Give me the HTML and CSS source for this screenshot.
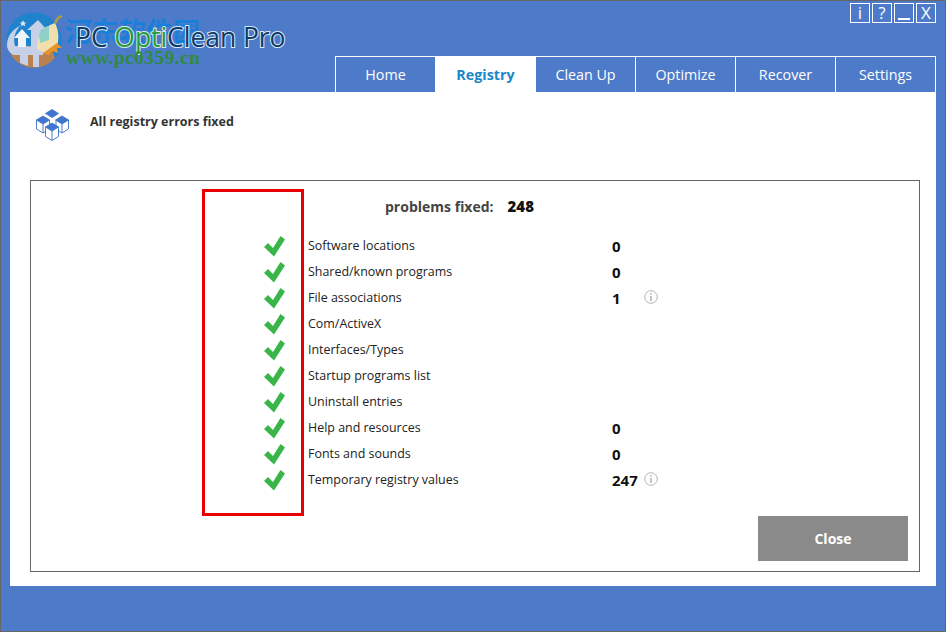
FILE: index.html
```html
<!DOCTYPE html>
<html lang="en">

<head>
    <meta charset="UTF-8">
    <title>PC OptiClean Pro</title>
    <link rel="stylesheet" href="styles.css">
</head>

<body>
    <div class="window">
        <header class="top">
            <div class="logo">
                <svg class="logo-icon" width="58" height="56" viewBox="0 0 58 56">
                    <circle cx="29" cy="28" r="27.500" fill="#1f82cc"/>
                    <path d="M1.500 34 L46 34 L50 46 A27.500 27.500 0 0 1 8 46 Z" fill="#b9814f"/>
                    <path d="M15 42 L23 42 L23 54 L15 51 Z M28 42 L34 42 L34 55 L28 55 Z" fill="#c6d0e6"/>
                    <path d="M2 33 C2 24 8 17 15 14 C10 20 8 26 10 34 L40 35 L38 43 L8 43 C4 40 2 37 2 33 Z" fill="#c6d0e6"/>
                    <path d="M13 35 L13 26 L9 26 L17 17 L25 26 L21 26 L21 35 Z" fill="#eef2f9"/>
                    <path d="M26 35 L26 18 L22 18 L33 8 L42 18 L36 18 L36 35 Z" fill="#c6d0e6"/>
                    <path d="M32 37 C31 28 36 18 45 13 L50 11 C54 18 54 28 52 34 L40 41 Z" fill="#f2dfae"/>
                    <path d="M34 23 C36 17 41 14 44 14 L44 28 L35 31 Z" fill="#8fd0c8"/>
                    <path d="M38 41 L45 36 L52 31 L57 36 L52 36 L53 41 L47 39 L44 43 Z" fill="#e8932e"/>
                    <path d="M50 11 L53 6 L57 4" stroke="#b59a3e" stroke-width="2.500" fill="none"/>
                    <path d="M18 8 L19 10.500 L21.500 10.500 L19.500 12 L20.500 14.500 L18 13 L15.500 14.500 L16.500 12 L14.500 10.500 L17 10.500 Z" fill="#dfe8f6"/>
                </svg>
                <span class="mark-cn">河东软件园</span>
                <span class="app-name">PC <span class="app-opti">Opti</span>Clean Pro</span>
                <span class="mark-url">www.pc0359.cn</span>
            </div>
            <div class="top-right">
                <div class="win-btns">
                    <span class="win-btn">i</span>
                    <span class="win-btn">?</span>
                    <span class="win-btn win-min"></span>
                    <span class="win-btn">X</span>
                </div>
                <nav class="tabs">
                    <a class="tab">Home</a>
                    <a class="tab active">Registry</a>
                    <a class="tab">Clean Up</a>
                    <a class="tab">Optimize</a>
                    <a class="tab">Recover</a>
                    <a class="tab">Settings</a>
                </nav>
            </div>
        </header>

        <main class="content">
            <div class="status">
                <svg width="36" height="34" viewBox="0 0 36 34">
                    <g stroke="#4d7bc9" stroke-width="1" stroke-linejoin="round" fill="#fff">
                        <path d="M1.500 12 L1.500 21 L8 25 L14.500 21 L14.500 12 Z"/>
                        <path d="M21 12 L21 21 L27 25 L33.500 21 L33.500 12 Z"/>
                        <path d="M8 16 L8 25 M27 16 L27 25"/>
                        <path d="M10.500 19 L10.500 28.500 L17 32.500 L23.500 28.500 L23.500 19 Z"/>
                        <path d="M17 23 L17 32.500"/>
                        <g fill="#3f74cf">
                            <path d="M17 1.500 L23.500 5.500 L17 9.500 L10.500 5.500 Z"/>
                            <path d="M8 8 L14.500 12 L8 16 L1.500 12 Z"/>
                            <path d="M27 8 L33.500 12 L27 16 L20.500 12 Z"/>
                            <path d="M17 15 L23.500 19 L17 23 L10.500 19 Z"/>
                        </g>
                    </g>
                </svg>
                <span class="status-text">All registry errors fixed</span>
            </div>

            <section class="panel">
                <div class="highlight"></div>
                <div class="summary"><span>problems fixed:</span><b>248</b></div>
                <div class="rows">
                    <div class="row"><svg class="check" viewBox="0 0 22 22"><use href="#tick"/></svg><span>Software locations</span><b>0</b></div>
                    <div class="row"><svg class="check" viewBox="0 0 22 22"><use href="#tick"/></svg><span>Shared/known programs</span><b>0</b></div>
                    <div class="row"><svg class="check" viewBox="0 0 22 22"><use href="#tick"/></svg><span>File associations</span><b>1</b><svg class="info" viewBox="0 0 14 14"><use href="#info"/></svg></div>
                    <div class="row"><svg class="check" viewBox="0 0 22 22"><use href="#tick"/></svg><span>Com/ActiveX</span></div>
                    <div class="row"><svg class="check" viewBox="0 0 22 22"><use href="#tick"/></svg><span>Interfaces/Types</span></div>
                    <div class="row"><svg class="check" viewBox="0 0 22 22"><use href="#tick"/></svg><span>Startup programs list</span></div>
                    <div class="row"><svg class="check" viewBox="0 0 22 22"><use href="#tick"/></svg><span>Uninstall entries</span></div>
                    <div class="row"><svg class="check" viewBox="0 0 22 22"><use href="#tick"/></svg><span>Help and resources</span><b>0</b></div>
                    <div class="row"><svg class="check" viewBox="0 0 22 22"><use href="#tick"/></svg><span>Fonts and sounds</span><b>0</b></div>
                    <div class="row"><svg class="check" viewBox="0 0 22 22"><use href="#tick"/></svg><span>Temporary registry values</span><b>247</b><svg class="info" viewBox="0 0 14 14"><use href="#info"/></svg></div>
                </div>
                <div class="actions"><button type="button" class="close-btn">Close</button></div>
            </section>
        </main>
    </div>

    <!-- shared icons -->
    <svg class="defs" width="0" height="0">
        <symbol id="tick" viewBox="0 0 22 22">
            <path d="M1 12 L5 8 L10 13 L17.500 1 L22 4.500 L11 21.500 Z" fill="#39b54a"/>
        </symbol>
        <symbol id="info" viewBox="0 0 14 14">
            <circle cx="7" cy="7" r="6.300" fill="none" stroke="#b5b5b5" stroke-width="1"/>
            <rect x="6.200" y="3" width="1.600" height="1.600" fill="#b5b5b5"/>
            <rect x="6.200" y="6" width="1.600" height="5" fill="#b5b5b5"/>
        </symbol>
    </svg>
</body>

</html>
```

FILE: styles.css
```css
html,
body {
    margin: 0;
    padding: 0;
}

body {
    font-family: "Open Sans", "Noto Sans", sans-serif;
    color: #333;
}

.window {
    box-sizing: border-box;
    width: 946px;
    height: 632px;
    padding: 1px 9px 45px 9px;
    background-color: #4d7bc9;
    border: 1px solid #666;
    display: flex;
    flex-direction: column;
}

/* header */
.top {
    height: 90px;
    display: flex;
    justify-content: space-between;
}

.logo {
    position: relative;
    width: 320px;
}

.logo-icon {
    position: absolute;
    left: -5px;
    top: 10px;
    overflow: visible;
}

.app-name {
    position: absolute;
    left: 65px;
    top: 16px;
    font-size: 26.400px;
    line-height: 38px;
    white-space: nowrap;
    color: #0d3a68;
    -webkit-text-stroke: 2px #dbe8f7;
    paint-order: stroke fill;
}

.app-opti {
    color: #2a9a3a;
}

.mark-cn {
    position: absolute;
    left: 55px;
    top: 12px;
    font-family: "Noto Sans CJK SC", sans-serif;
    font-size: 27px;
    font-weight: 700;
    line-height: 34px;
    color: #1a7fd8;
    white-space: nowrap;
}

.mark-url {
    position: absolute;
    left: 56px;
    top: 46px;
    font-family: "Liberation Serif", serif;
    font-size: 19.500px;
    font-weight: 700;
    line-height: 20px;
    letter-spacing: .4px;
    color: #2e8b3e;
    white-space: nowrap;
}

.top-right {
    display: flex;
    flex-direction: column;
    align-items: flex-end;
    justify-content: space-between;
    padding-top: 1px;
}

.win-btns {
    display: flex;
    gap: 2px;
}

.win-btn {
    box-sizing: border-box;
    width: 20px;
    height: 20px;
    border: 1px solid #fff;
    color: #fff;
    font-size: 17px;
    line-height: 18px;
    text-align: center;
}

.win-min {
    position: relative;
}

.win-min::after {
    content: "";
    position: absolute;
    left: 3px;
    right: 3px;
    bottom: 2px;
    height: 2px;
    background-color: #fff;
}

.tabs {
    display: flex;
}

.tab {
    box-sizing: border-box;
    width: 101px;
    height: 36px;
    margin-left: -1px;
    border: 1px solid #fff;
    border-bottom: none;
    color: #fff;
    font-size: 14.300px;
    line-height: 36px;
    text-align: center;
}

.tab:first-child {
    margin-left: 0;
}

.tab.active {
    background-color: #fff;
    color: #1b87c9;
    font-weight: 700;
}

/* white area */
.content {
    flex: 1;
    background-color: #fff;
    padding: 0 16px 14px 20px;
    display: flex;
    flex-direction: column;
}

.status {
    height: 88px;
    padding-left: 5px;
    display: flex;
    align-items: flex-start;
    gap: 19px;
}

.status svg {
    margin-top: 16px;
}

.status-text {
    margin-top: 20px;
    font-size: 12.500px;
    line-height: 20px;
    font-weight: 700;
}

.panel {
    flex: 1;
    position: relative;
    border: 1px solid #666;
    display: flex;
    flex-direction: column;
}

.highlight {
    position: absolute;
    left: 171px;
    top: 8px;
    width: 96px;
    height: 321px;
    border: 3px solid #e90000;
}

.summary {
    padding: 16px 0 0 354px;
    height: 37px;
    box-sizing: border-box;
    display: flex;
    gap: 14px;
    font-size: 14px;
    line-height: 20px;
    font-weight: 700;
    color: #444;
}

.summary b {
    color: #111;
    font-size: 15px;
    line-height: 18px;
}

.rows {
    padding-top: 15px;
}

.row {
    height: 26px;
    display: grid;
    grid-template-columns: 254px 327px 32px 14px;
    align-items: center;
    font-size: 12.450px;
    color: #222;
}

.check {
    width: 22px;
    height: 22px;
    margin-left: 232px;
}

.row b {
    font-size: 15px;
    color: #111;
}

.row span {
    padding-left: 23px;
    padding-bottom: 2px;
}

.info {
    width: 14px;
    height: 14px;
    margin-bottom: 2px;
}

.actions {
    flex: 1;
    display: flex;
    justify-content: flex-end;
    align-items: flex-start;
    padding: 23px 11px 0 0;
}

.close-btn {
    width: 150px;
    height: 45px;
    border: none;
    background-color: #8a8a8a;
    color: #fff;
    font-family: inherit;
    font-size: 14px;
    font-weight: 700;
}

.defs {
    position: absolute;
}
```
